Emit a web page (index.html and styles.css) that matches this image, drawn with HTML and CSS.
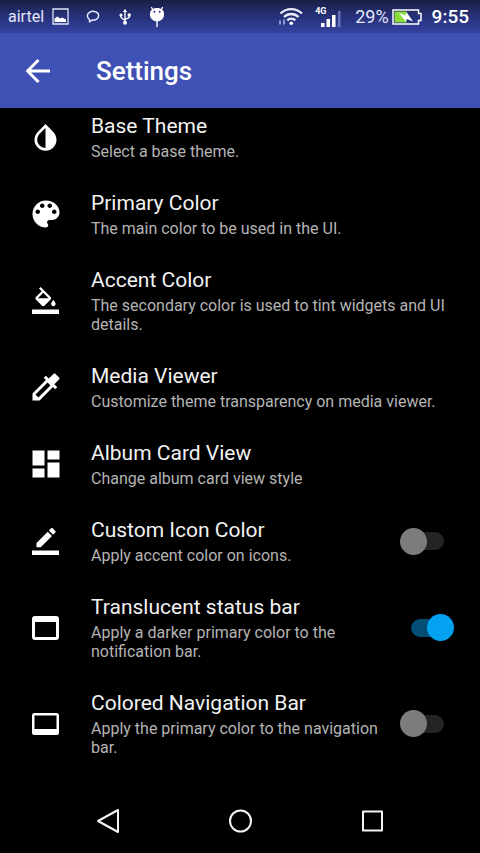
FILE: index.html
```html
<!DOCTYPE html>
<html lang="en">
<head>
<meta charset="utf-8">
<meta name="viewport" content="width=device-width, initial-scale=1">
<title>Settings</title>
<link rel="stylesheet" href="styles.css">
</head>
<body>
<div class="status-bar">
  <div class="status-left">
    <span class="carrier">airtel</span>
    <svg class="s-picture" width="17" height="17" viewBox="0 0 17 17"><path d="M1 1h15v15H1z" fill="none" stroke="#dfe3f5" stroke-width="1.3"/><path d="M2.500 14v-3.500l3-2 2.500 2 2-1 4 2V14z" fill="#fff"/></svg>
    <svg class="s-chat" width="14" height="14" viewBox="0 0 14 14"><path d="M3.500 9.500C.5 7.500.8 4 3.500 2.300c2.600-1.600 7-1.100 8.500 1.200 1.500 2.500.2 5.300-2.500 6.200-1.300.5-2.600.5-3.500.3L3.600 12z" fill="none" stroke="#e6eaff" stroke-width="1.500" stroke-linejoin="round"/></svg>
    <svg class="s-usb" width="12" height="16" viewBox="0 0 12 16"><g fill="#fff"><path d="M6 0l2.200 3H3.800z"/><circle cx="6" cy="13.800" r="2"/><circle cx="2" cy="6" r="1.600"/><path d="M8.700 4.500h3v3h-3z"/></g><path d="M6 2v11M2 6v2.500l4 3M10.200 6v2.500l-4.200 2" fill="none" stroke="#fff" stroke-width="1.300"/></svg>
    <svg class="s-droid" width="16" height="22" viewBox="0 0 16 22"><path d="M4 4L2.500 1.500M12 4l1.500-2.500M8 14v6.500" stroke="#fff" stroke-width="1.400" stroke-linecap="round"/><path d="M1 7C1.500 3.800 4.500 2 8 2s6.500 1.800 7 5v2c0 3.500-3.300 6.500-7 6.500S1 12.500 1 9z" fill="#fff"/><circle cx="5.300" cy="5.800" r="1" fill="#27307a"/><circle cx="10.700" cy="5.800" r="1" fill="#27307a"/></svg>
  </div>
  <div class="status-right">
    <svg class="s-wifi" width="24" height="19" viewBox="0 0 24 19"><g fill="none" stroke="#e8ebf8" stroke-width="2.400"><path d="M1.500 6.500c6-5.800 15.500-5.800 21.500 0"/><path d="M5 10c4-4 10.500-4 14.500 0"/><path d="M8.300 13.300c2.200-2.200 5.800-2.200 8 0"/></g><circle cx="12.300" cy="16.300" r="1.800" fill="#fff"/><path d="M1 13.500v4M5 12.500v5" stroke="#8d99d8" stroke-width="2"/></svg>
    <div class="signal">
      <span class="network">4G</span>
      <svg width="20" height="16" viewBox="0 0 20 16"><path d="M0 12h3.500v4H0zM5.500 8H9v8H5.500zM11 4h3.500v12H11z" fill="#fff"/><path d="M17 0h2.500v16H17z" fill="#6772b8"/></svg>
    </div>
    <span class="percent">29%</span>
    <svg class="s-battery" width="30" height="16" viewBox="0 0 30 16"><path d="M1 1h25.500v3.500H29v7h-2.500V15H1z" fill="none" stroke="#fff" stroke-width="1.500"/><path d="M2.500 2.500h12v11h-12z" fill="#8bdc38"/><path d="M7 4l6.500 2.500L14.500 3l6.500 9.500-6-2.500-1.500 2.500z" fill="#fff"/></svg>
    <span class="clock">9:55</span>
  </div>
</div>
<header class="app-bar">
  <button class="back" type="button" aria-label="Back"><svg width="24" height="24" viewBox="0 0 24 24"><path d="M24 12H2M12.500 1L1.500 12l11 11" fill="none" stroke="#fff" stroke-width="3"/></svg></button>
  <h1>Settings</h1>
</header>
<main class="settings">
  <a class="row" href="#base-theme">
    <span class="icon"><svg width="33" height="33" viewBox="0 0 24 24"><path d="M17.660 7.930L12 2.270 6.340 7.930c-3.120 3.120-3.120 8.190 0 11.310C7.900 20.800 9.950 21.580 12 21.580s4.100-.78 5.660-2.340c3.120-3.120 3.120-8.190 0-11.310zM12 19.590c-1.600 0-3.110-.62-4.240-1.760C6.620 16.690 6 15.190 6 13.590s.62-3.110 1.760-4.240L12 5.100z"/></svg></span>
    <span class="text"><span class="title">Base Theme</span><span class="summary">Select a base theme.</span></span>
  </a>
  <a class="row" href="#primary-color">
    <span class="icon"><svg width="36" height="36" viewBox="0 0 24 24"><path d="M12 3c-4.970 0-9 4.030-9 9s4.030 9 9 9c.83 0 1.500-.67 1.500-1.500 0-.39-.15-.74-.39-1.010-.23-.26-.38-.61-.38-.99 0-.83.67-1.500 1.500-1.500H16c2.760 0 5-2.240 5-5 0-4.420-4.030-8-9-8zm-5.500 9c-.83 0-1.500-.67-1.500-1.500S5.670 9 6.500 9 8 9.670 8 10.500 7.330 12 6.500 12zm3-4C8.670 8 8 7.330 8 6.500S8.670 5 9.500 5s1.500.67 1.500 1.500S10.330 8 9.500 8zm5 0c-.83 0-1.500-.67-1.500-1.500S13.670 5 14.500 5s1.500.67 1.500 1.500S15.330 8 14.500 8zm3 4c-.83 0-1.500-.67-1.500-1.500S16.670 9 17.500 9s1.500.67 1.500 1.500-.67 1.500-1.500 1.500z"/></svg></span>
    <span class="text"><span class="title">Primary Color</span><span class="summary">The main color to be used in the UI.</span></span>
  </a>
  <a class="row" href="#accent-color">
    <span class="icon"><svg width="27" height="27" viewBox="0 0 24 24"><path d="M16.560 8.940L7.620 0 6.210 1.410l2.380 2.380-5.150 5.150c-.59.59-.59 1.540 0 2.120l5.500 5.500c.29.290.68.440 1.060.440s.77-.15 1.060-.44l5.500-5.500c.59-.58.59-1.530 0-2.120zM5.210 10L10 5.210 14.790 10zM19 11.500s-2 2.170-2 3.500c0 1.100.9 2 2 2s2-.9 2-2c0-1.330-2-3.500-2-3.500zM0 20h24v4H0z"/></svg></span>
    <span class="text"><span class="title">Accent Color</span><span class="summary">The secondary color is used to tint widgets and UI details.</span></span>
  </a>
  <a class="row" href="#media-viewer">
    <span class="icon"><svg width="36" height="36" viewBox="0 0 24 24"><path d="M20.710 5.630l-2.340-2.340c-.39-.39-1.020-.39-1.410 0l-3.120 3.120-1.930-1.910-1.410 1.410 1.420 1.420L3 16.250V21h4.750l8.920-8.920 1.420 1.420 1.410-1.410-1.920-1.920 3.120-3.120c.4-.4.4-1.030.01-1.420zM6.920 19L5 17.080l8.060-8.060 1.920 1.920z"/></svg></span>
    <span class="text"><span class="title">Media Viewer</span><span class="summary">Customize theme transparency on media viewer.</span></span>
  </a>
  <a class="row" href="#album-card-view">
    <span class="icon"><svg width="36" height="36" viewBox="0 0 24 24"><path d="M3 13h8V3H3zM3 21h8v-6H3zM13 21h8V11h-8zM13 3v6h8V3z"/></svg></span>
    <span class="text"><span class="title">Album Card View</span><span class="summary">Change album card view style</span></span>
  </a>
  <label class="row" for="icon-color">
    <span class="icon"><svg width="27" height="27" viewBox="0 0 24 24"><path d="M17.750 7L14 3.250l-10 10V17h3.750zM20.710 4.040c.39-.39.39-1.020 0-1.410L18.370.29c-.39-.39-1.020-.39-1.410 0L15 2.250 18.750 6zM0 20h24v4H0z"/></svg></span>
    <span class="text"><span class="title">Custom Icon Color</span><span class="summary">Apply accent color on icons.</span></span>
    <input class="switch" id="icon-color" type="checkbox">
  </label>
  <label class="row" for="translucent">
    <span class="icon"><svg width="27" height="24" viewBox="0 0 27 24"><path fill-rule="evenodd" d="M3 0h21a3 3 0 0 1 3 3v18a3 3 0 0 1-3 3H3a3 3 0 0 1-3-3V3a3 3 0 0 1 3-3zM3 6v15h21V6z"/></svg></span>
    <span class="text"><span class="title">Translucent status bar</span><span class="summary">Apply a darker primary color to the notification bar.</span></span>
    <input class="switch" id="translucent" type="checkbox" checked>
  </label>
  <label class="row" for="nav-bar">
    <span class="icon"><svg width="27" height="22" viewBox="0 0 27 22"><path fill-rule="evenodd" d="M2.500 0h22A2.500 2.500 0 0 1 27 2.500v17a2.500 2.500 0 0 1-2.500 2.500h-22A2.500 2.500 0 0 1 0 19.500v-17A2.500 2.500 0 0 1 2.500 0zM2.500 2.500V16h22V2.500z"/></svg></span>
    <span class="text"><span class="title">Colored Navigation Bar</span><span class="summary">Apply the primary color to the navigation bar.</span></span>
    <input class="switch" id="nav-bar" type="checkbox">
  </label>
</main>
<nav class="nav-bar" aria-label="System">
  <button type="button" aria-label="System back"><svg width="26" height="26" viewBox="0 0 26 26"><path d="M23 2v22L3 13z"/></svg></button>
  <button type="button" aria-label="Home"><svg width="26" height="26" viewBox="0 0 26 26"><circle cx="13.500" cy="13" r="10.500"/></svg></button>
  <button type="button" aria-label="Recent apps"><svg width="26" height="26" viewBox="0 0 26 26"><path d="M4 3.500h19v19H4z"/></svg></button>
</nav>
</body>
</html>
```
FILE: styles.css
```css
* {
  box-sizing: border-box;
}

body {
  margin: 0;
  min-height: 100vh;
  display: flex;
  flex-direction: column;
  background: #000;
  color: #fff;
  font-family: Roboto, "Liberation Sans", sans-serif;
}

button {
  display: flex;
  align-items: center;
  justify-content: center;
  padding: 0;
  border: 0;
  background: none;
}

svg {
  display: block;
  flex: none;
}

.status-bar {
  display: flex;
  justify-content: space-between;
  height: 33px;
  padding: 0 11px 0 8px;
  background: linear-gradient(#1a2045, #27317a 50%, #3543a0);
}

.status-left,
.status-right {
  display: flex;
  align-items: center;
}

.carrier {
  width: 36px;
  margin-right: 8px;
  font-size: 16px;
  color: #e3e7fb;
}

.s-picture {
  margin-right: 17px;
}

.s-chat {
  margin-right: 19px;
}

.s-usb {
  margin-right: 18px;
}

.s-wifi {
  margin-right: 12px;
}

.signal {
  display: flex;
  align-items: flex-end;
  height: 20px;
  margin-right: 14px;
}

.network {
  align-self: flex-start;
  width: 6px;
  font-size: 9px;
  line-height: 8px;
  font-weight: 700;
}

.percent {
  margin-right: 3px;
  font-size: 18px;
  color: #e3e7fb;
}

.s-battery {
  margin-right: 10px;
}

.clock {
  font-size: 19px;
  font-weight: 500;
}

.app-bar {
  display: flex;
  align-items: center;
  height: 75px;
  padding: 0 20px;
  background: #4051b5;
}

.back {
  width: 36px;
  height: 48px;
  margin-right: 40px;
}

h1 {
  margin: 0;
  font-size: 26px;
  line-height: 32px;
  font-weight: 500;
}

.settings {
  flex: 1;
  overflow: hidden;
}

.row {
  display: flex;
  align-items: center;
  padding: 14px 26px 15px;
  color: #fff;
  text-decoration: none;
}

/* The list is scrolled slightly, so the first row starts under the app bar. */
.row:first-child {
  margin-top: -9px;
}

.icon {
  display: flex;
  justify-content: center;
  flex: none;
  width: 39px;
  margin-right: 26px;
  fill: #fff;
}

.text {
  display: flex;
  flex: 1;
  flex-direction: column;
  gap: 3px;
}

.title {
  font-size: 21px;
  line-height: 26px;
  color: #f2f2f2;
}

.summary {
  font-size: 16px;
  line-height: 19px;
  color: #b4b4b4;
}

.switch {
  appearance: none;
  flex: none;
  display: flex;
  align-items: center;
  position: relative;
  width: 54px;
  height: 27px;
  margin: 0 0 0 20px;
}

.switch::before {
  content: "";
  width: 33px;
  height: 18px;
  margin-left: 11px;
  border-radius: 9px;
  background: #242424;
}

.switch::after {
  content: "";
  position: absolute;
  top: 0;
  left: 0;
  width: 27px;
  height: 27px;
  border-radius: 50%;
  background: #7c7c7c;
}

.switch:checked::before {
  background: #024e74;
}

.switch:checked::after {
  left: 27px;
  background: #03a2f0;
}

.nav-bar {
  display: flex;
  height: 64px;
  padding: 0 42px;
}

.nav-bar button {
  flex: 1;
}

.nav-bar svg {
  fill: none;
  stroke: #f4f4f4;
  stroke-width: 2;
  stroke-linejoin: round;
}
```
